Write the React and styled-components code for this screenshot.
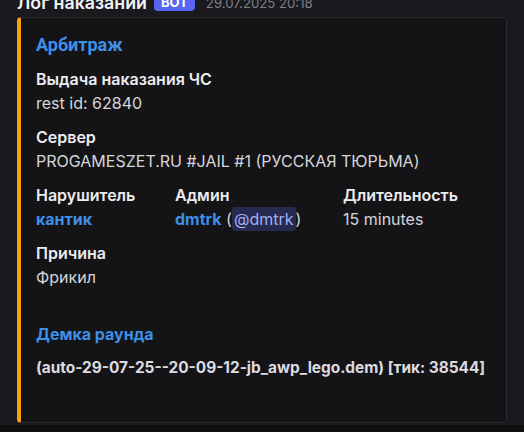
import React from "react";
import styled, { createGlobalStyle } from "styled-components";

const Global = createGlobalStyle`
  html, body { margin: 0; padding: 0; background: #1a1a1e; }
  body { font-family: Inter, "Noto Sans", sans-serif; -webkit-font-smoothing: antialiased; }
`;

const Page = styled.div`
  width: 524px;
  height: 432px;
  overflow: hidden;
  display: flex;
  flex-direction: column;
  background: #1a1a1e;
`;

const Message = styled.div`
  padding: 0 17px;
  display: flex;
  flex-direction: column;
  margin-top: -9px;
`;

const Header = styled.div`
  display: flex;
  align-items: center;
  height: 22px;
  margin-bottom: 4px;
`;

const Author = styled.span`
  font-size: 17.8px;
  font-weight: 600;
  color: #f2f3f5;
  white-space: nowrap;
`;

const BotTag = styled.span`
  margin-left: 7px;
  background: #5865f2;
  color: #fff;
  font-size: 13px;
  font-weight: 700;
  height: 17px;
  line-height: 17px;
  padding: 0 7px;
  border-radius: 4px;
  margin-top: 1px;
`;

const Time = styled.span`
  margin-left: 11px;
  font-size: 13.2px;
  color: #7e7e88;
  margin-top: 2px;
  white-space: nowrap;
`;

const Embed = styled.div`
  box-sizing: border-box;
  width: 490px;
  height: 406px;
  background: #141417;
  border: 1px solid #2a2a2f;
  border-left: 4px solid #f5a30b;
  border-radius: 4px;
  padding: 16px 16px 0 15px;
  display: flex;
  flex-direction: column;
`;

const Title = styled.div`
  font-family: Roboto, Inter, sans-serif;
  font-size: 18px;
  font-weight: 700;
  line-height: 22px;
  color: #3d8fe8;
  margin-bottom: 13px;
`;

const Fields = styled.div`
  display: grid;
  grid-template-columns: 139px 168px 1fr;
  row-gap: 14px;
`;

const Field = styled.div`
  grid-column: ${(p) => (p.$inline ? "auto" : "1 / -1")};
  display: flex;
  flex-direction: column;
  gap: 4px;
`;

const FieldName = styled.div`
  font-size: 16px;
  font-weight: 600;
  line-height: 20px;
  color: #ececef;
  white-space: nowrap;
`;

const FieldValue = styled.div`
  font-size: 16px;
  font-weight: 400;
  line-height: 20px;
  color: #d6d6da;
  white-space: nowrap;
`;

const Link = styled.span`
  color: #3d8fe8;
  font-weight: ${(p) => (p.$bold ? 700 : 400)};
`;

const Mention = styled.span`
  background: #262a4f;
  color: #a4aef6;
  border-radius: 3px;
  padding: 2px 2px;
`;

const Demo = styled.div`
  margin-top: 37px;
  display: flex;
  flex-direction: column;
  gap: 14px;
`;

const DemoTitle = styled.div`
  font-size: 16px;
  font-weight: 700;
  line-height: 20px;
  color: #3d8fe8;
`;

const DemoFile = styled.div`
  font-size: 15.4px;
  font-weight: 700;
  line-height: 20px;
  color: #dcdce0;
  white-space: nowrap;
`;

const BottomStrip = styled.div`
  margin-top: auto;
  height: 7px;
  background: #0f0f11;
`;

export default function App() {
  return (
    <>
      <Global />
      <Page>
        <Message>
          <Header>
            <Author>Лог наказаний</Author>
            <BotTag>BOT</BotTag>
            <Time>29.07.2025 20:18</Time>
          </Header>
          <Embed>
            <Title>Арбитраж</Title>
            <Fields>
              <Field>
                <FieldName>Выдача наказания ЧС</FieldName>
                <FieldValue>rest id: 62840</FieldValue>
              </Field>
              <Field>
                <FieldName>Сервер</FieldName>
                <FieldValue>PROGAMESZET.RU #JAIL #1 (РУССКАЯ ТЮРЬМА)</FieldValue>
              </Field>
              <Field $inline>
                <FieldName>Нарушитель</FieldName>
                <FieldValue>
                  <Link $bold>кантик</Link>
                </FieldValue>
              </Field>
              <Field $inline>
                <FieldName>Админ</FieldName>
                <FieldValue>
                  <Link $bold>dmtrk</Link> (<Mention>@dmtrk</Mention>)
                </FieldValue>
              </Field>
              <Field $inline>
                <FieldName>Длительность</FieldName>
                <FieldValue>15 minutes</FieldValue>
              </Field>
              <Field>
                <FieldName>Причина</FieldName>
                <FieldValue>Фрикил</FieldValue>
              </Field>
            </Fields>
            <Demo>
              <DemoTitle>Демка раунда</DemoTitle>
              <DemoFile>(auto-29-07-25--20-09-12-jb_awp_lego.dem) [тик: 38544]</DemoFile>
            </Demo>
          </Embed>
        </Message>
        <BottomStrip />
      </Page>
    </>
  );
}
